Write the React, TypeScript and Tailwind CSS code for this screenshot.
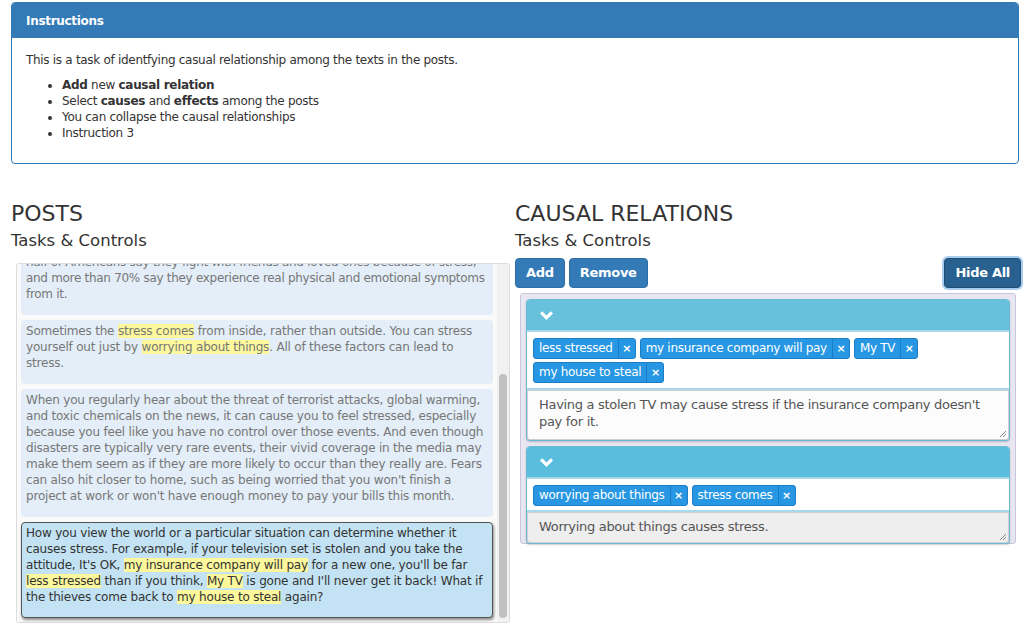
import { useEffect, useRef } from "react";

const font = { fontFamily: '"DejaVu Sans", Verdana, sans-serif' };

function Hl({ children }: { children: React.ReactNode }) {
  return <span className="bg-[#fdf89c]">{children}</span>;
}

function Tag({ label }: { label: string }) {
  return (
    <span className="inline-flex h-[21px] items-stretch rounded-[3px] border border-[#1b7dc6] bg-[#2797e4] text-[12px] leading-[19px] tracking-[-0.3px] text-white">
      <span className="px-[5px]">{label}</span>
      <span className="flex w-[17px] items-center justify-center border-l border-[#1b7dc6] text-[11px] font-bold">×</span>
    </span>
  );
}

function Grip() {
  return (
    <svg className="absolute bottom-[2px] right-[2px]" width="7" height="7" viewBox="0 0 7 7">
      <path d="M1 7 L7 1 M4 7 L7 4" stroke="#888" strokeWidth="1" />
    </svg>
  );
}

function Chevron() {
  return (
    <svg width="13" height="9" viewBox="0 0 13 9">
      <path d="M0 2.5 L2.2 0.3 L6.5 4.6 L10.8 0.3 L13 2.5 L6.5 9 Z" fill="#fff" />
    </svg>
  );
}

function Relation({
  tags,
  note,
  disabled,
  headerBg,
  tagsH,
}: {
  tags: string[];
  note: string;
  disabled?: boolean;
  headerBg: string;
  tagsH: string;
}) {
  return (
    <div className="flex flex-col gap-[2px] rounded-[4px] border border-[#6cb9d4] bg-[#a9d8ea] shadow-[0_1px_2px_rgba(0,0,0,0.2)]">
      <div className={`flex h-[30px] items-center rounded-t-[3px] px-[13px] ${headerBg}`}>
        <Chevron />
      </div>
      <div className={`flex flex-wrap content-start gap-x-[4px] gap-y-[3px] bg-white px-[6px] pt-[6px] ${tagsH}`}>
        {tags.map((t) => (
          <Tag key={t} label={t} />
        ))}
      </div>
      <div
        className={`relative rounded-b-[3px] border border-[#cfcfcf] px-[11px] pt-[5px] text-[13px] leading-[17px] tracking-[-0.3px] text-[#555] ${
          disabled ? "h-[31px] bg-[#eeeeee]" : "h-[50px] bg-[#fcfcfc]"
        }`}
      >
        {note}
        <Grip />
      </div>
    </div>
  );
}

export default function App() {
  const scroller = useRef<HTMLDivElement>(null);
  const second = useRef<HTMLDivElement>(null);
  useEffect(() => {
    if (scroller.current && second.current) {
      scroller.current.scrollTop = second.current.offsetTop - 56;
    }
  }, []);

  const btn =
    "h-[30px] rounded-[4px] border px-[10px] text-[13px] font-bold tracking-[-0.3px] text-white";

  return (
    <div className="min-h-[629px] w-[1032px] bg-white px-[11px] pt-[2px] text-[#333]" style={font}>
      {/* Instructions panel */}
      <div className="w-[1008px] overflow-hidden rounded-[4px] border border-[#337ab7]">
        <div className="flex h-[35px] items-center bg-[#337ab7] px-[14px] text-[12px] font-bold tracking-[-0.3px] text-white">
          Instructions
        </div>
        <div className="h-[125px] px-[14px] pt-[14px] text-[12px] leading-[16px] tracking-[-0.3px]">
          <p className="mb-[9px]">This is a task of identfying casual relationship among the texts in the posts.</p>
          <ul className="list-disc pl-[36px]">
            <li>
              <b>Add</b> new <b>causal relation</b>
            </li>
            <li>
              Select <b>causes</b> and <b>effects</b> among the posts
            </li>
            <li>You can collapse the causal relationships</li>
            <li>Instruction 3</li>
          </ul>
        </div>
      </div>

      <div className="mt-[36px] flex gap-[5px]">
        {/* Posts */}
        <div className="w-[499px]">
          <h2 className="h-[27px] text-[22px] leading-[27px]">POSTS</h2>
          <h3 className="mt-[4px] h-[20px] text-[16.5px] leading-[20px]">Tasks &amp; Controls</h3>
          <div className="ml-[5px] mt-[12px] flex h-[360px] rounded-[3px] border border-[#dcdcdc] bg-[#fafafa]">
            <div
              ref={scroller}
              className="relative flex-1 overflow-hidden px-[4px] text-[12px] leading-[16px] tracking-[-0.2px]"
            >
              <div className="flex flex-col gap-[5px] pt-[4px] pb-[4px]">
                <div className="rounded-[4px] bg-[#e3eef8] px-[5px] pt-[3px] pb-[13px] tracking-[-0.3px] text-[#777]">
                  Stress is a normal part of life, and it has become so common that nearly
                  <br />
                  half of Americans say they fight with friends and loved ones because of stress,
                  <br />
                  and more than 70% say they experience real physical and emotional symptoms
                  <br />
                  from it.
                </div>
                <div ref={second} className="rounded-[4px] bg-[#e3eef8] px-[5px] pt-[3px] pb-[13px] text-[#777]">
                  Sometimes the <Hl>stress comes</Hl> from inside, rather than outside. You can stress
                  yourself out just by <Hl>worrying about things</Hl>. All of these factors can lead to
                  stress.
                </div>
                <div className="rounded-[4px] bg-[#e3eef8] px-[5px] pt-[3px] pb-[13px] text-[#777]">
                  When you regularly hear about the threat of terrorist attacks, global warming, and toxic
                  chemicals on the news, it can cause you to feel stressed, especially because you feel like
                  you have no control over those events. And even though disasters are typically very rare
                  events, their vivid coverage in the media may make them seem as if they are more likely to
                  occur than they really are. Fears can also hit closer to home, such as being worried that
                  you won't finish a project at work or won't have enough money to pay your bills this month.
                </div>
                <div className="rounded-[4px] border border-[#555] bg-[#c3e3f4] px-[4px] pt-[2px] pb-[12px] shadow-[1px_2px_3px_rgba(0,0,0,0.45)]">
                  How you view the world or a particular situation can determine whether it causes stress.
                  For example, if your television set is stolen and you take the attitude, It's OK,{" "}
                  <Hl>my insurance company will pay</Hl> for a new one, you'll be far{" "}
                  <Hl>less stressed</Hl> than if you think, <Hl>My TV</Hl> is gone and I'll never get it
                  back! What if the thieves come back to <Hl>my house to steal</Hl> again?
                </div>
              </div>
            </div>
            <div className="flex w-[12px] flex-col bg-[#f1f1f1] px-[2px] pt-[110px] pb-[4px]">
              <div className="flex-1 rounded-full bg-[#c1c1c1]" />
            </div>
          </div>
        </div>

        {/* Causal relations */}
        <div className="flex-1">
          <h2 className="h-[27px] text-[22px] leading-[27px]">CAUSAL RELATIONS</h2>
          <h3 className="mt-[4px] h-[20px] text-[16.5px] leading-[20px]">Tasks &amp; Controls</h3>
          <div className="mt-[7px] flex items-center gap-[4px]">
            <button className={`${btn} border-[#2e6da4] bg-[#337ab7]`}>Add</button>
            <button className={`${btn} border-[#2e6da4] bg-[#337ab7]`}>Remove</button>
            <div className="flex-1" />
            <button className={`${btn} border-[#204d74] bg-[#286090] ring-2 ring-[#a9cdee]`}>Hide All</button>
          </div>
          <div className="mx-[5px] mt-[5px] flex h-[251px] flex-col gap-[5px] rounded-[3px] border border-[#c9c6dc] bg-[#e7e6f1] p-[5px]">
            <Relation
              headerBg="bg-[#67c0dc]"
              tagsH="h-[56px]"
              tags={["less stressed", "my insurance company will pay", "My TV", "my house to steal"]}
              note="Having a stolen TV may cause stress if the insurance company doesn't pay for it."
            />
            <Relation
              headerBg="bg-[#5bbddd]"
              tagsH="h-[31px]"
              tags={["worrying about things", "stress comes"]}
              note="Worrying about things causes stress."
              disabled
            />
          </div>
        </div>
      </div>
    </div>
  );
}
